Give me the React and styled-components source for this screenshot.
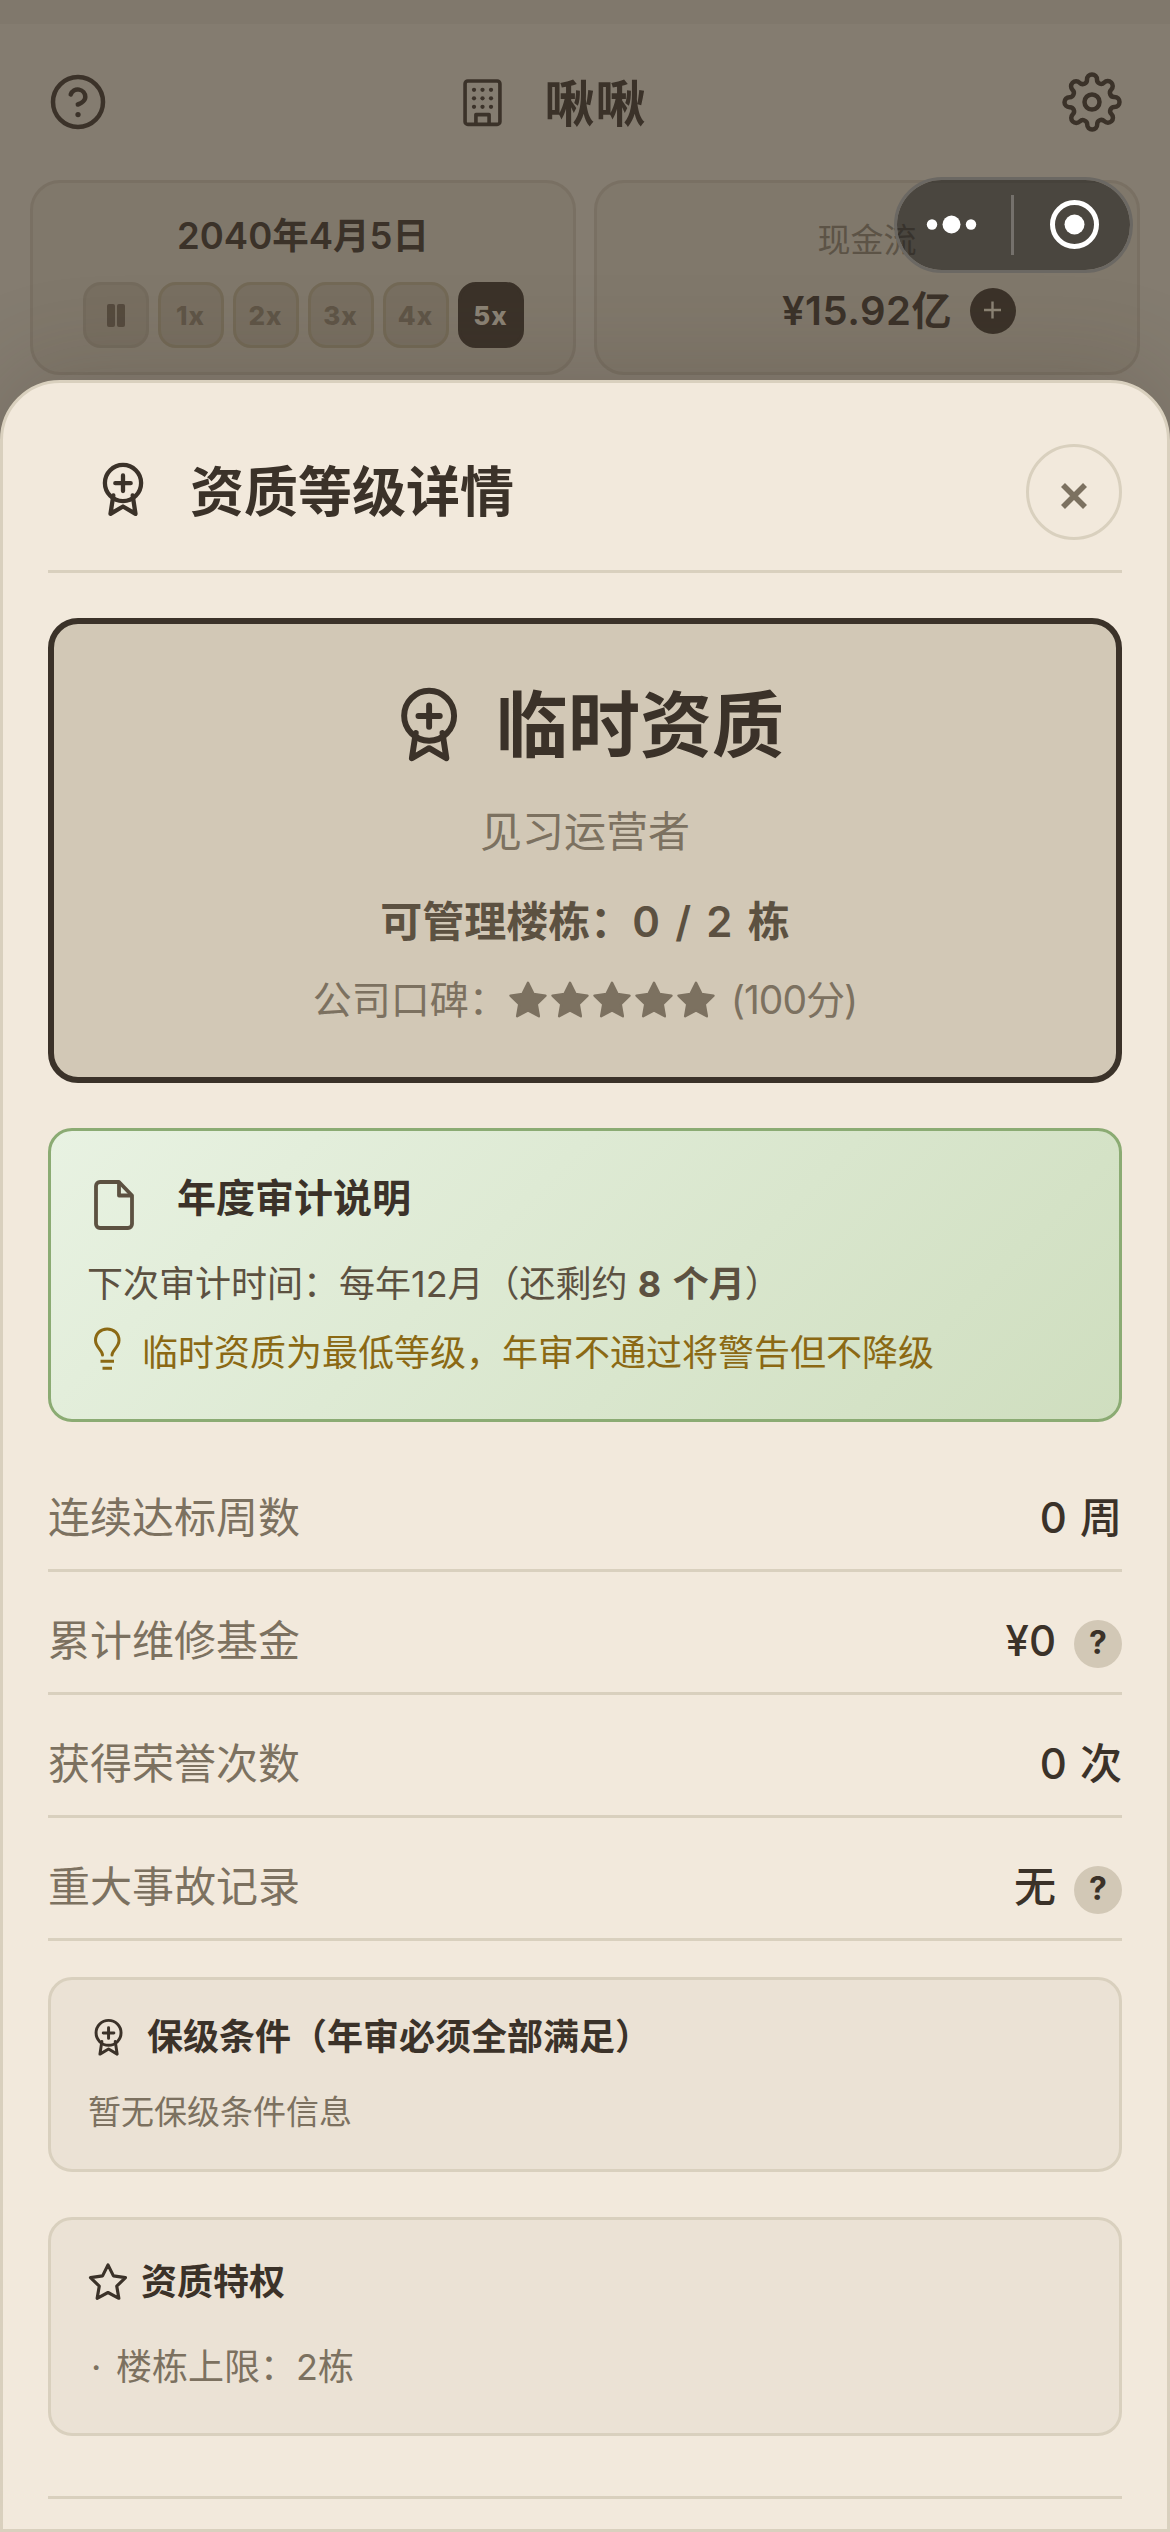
import styled, { createGlobalStyle } from "styled-components";
import { FiSettings } from "react-icons/fi";

const GlobalStyle = createGlobalStyle`
  * {
    box-sizing: border-box;
  }

  body {
    margin: 0;
    font-family: Inter, "Noto Sans CJK SC", sans-serif;
    color: #3b3229;
    background: #847c70;
  }
`;

const Page = styled.div`
  position: relative;
  display: flex;
  flex-direction: column;
  width: 1170px;
  height: 2532px;
  overflow: hidden;
  background: #847c70;
`;

const StatusBar = styled.div`
  height: 24px;
  background: #80786c;
`;

const TopBar = styled.header`
  display: flex;
  align-items: center;
  justify-content: space-between;
  height: 156px;
  padding: 0 48px;

  svg {
    display: block;
  }
`;

const CompanyName = styled.div`
  display: flex;
  align-items: center;
  gap: 37px;
  padding-right: 67px;
  font-size: 50px;
  font-weight: 600;
  letter-spacing: 1px;
`;

const CompanyText = styled.span`
  padding-top: 4px;
  line-height: 60px;
`;

const Summary = styled.div`
  display: grid;
  grid-template-columns: 1fr 1fr;
  gap: 18px;
  height: 200px;
  padding: 0 30px 5px;
`;

const SummaryCard = styled.div`
  display: flex;
  flex-direction: column;
  align-items: center;
  padding-top: ${(props) => props.$top}px;
  border: 3px solid #797063;
  border-radius: 30px;
  background: #80786b;
`;

const GameDate = styled.div`
  margin-bottom: 22px;
  font-size: 36.5px;
  font-weight: 600;
  line-height: 48px;
`;

const Speeds = styled.div`
  display: flex;
  gap: 9px;
`;

const SpeedButton = styled.div`
  display: flex;
  align-items: center;
  justify-content: center;
  gap: 2px;
  width: 66px;
  height: 66px;
  border: 3px solid #736956;
  border-radius: 18px;
  background: #786f61;
  color: #5f5547;
  font-size: 26px;
  font-weight: 800;
  letter-spacing: 1px;

  ${(props) => props.$paused && `border-color: #746b5d;`}

  ${(props) =>
    props.$active &&
    `
    border-color: #3b3229;
    background: #3b3229;
    color: #8b8375;
  `}
`;

const PauseBar = styled.i`
  width: 8px;
  height: 23px;
  border-radius: 2px;
  background: #554b3e;
`;

const CashLabel = styled.div`
  margin-bottom: 27px;
  color: #5c5346;
  font-size: 33px;
  line-height: 40px;
`;

const Cash = styled.div`
  display: flex;
  align-items: center;
  gap: 18px;
  padding-left: 64px;
  font-size: 40px;
  font-weight: 600;
  line-height: 48px;
  letter-spacing: 0.5px;
`;

const AddButton = styled.div`
  display: flex;
  align-items: center;
  justify-content: center;
  width: 46px;
  height: 46px;
  border-radius: 50%;
  background: #3b3229;
`;

const Capsule = styled.div`
  position: absolute;
  top: 177px;
  left: 894px;
  display: flex;
  align-items: center;
  width: 239px;
  height: 96px;
  border: 3px solid #6b6863;
  border-radius: 48px;
  background: rgba(20, 20, 20, 0.5);
  background-clip: padding-box;
`;

const Sheet = styled.section`
  flex: 1;
  padding: 61px 45px 0;
  border: 3px solid #d9d0be;
  border-radius: 60px 60px 0 0;
  background: #f2e9dc;
  box-shadow: 0 -12px 96px rgba(59, 50, 41, 0.2);
`;

const SheetHeader = styled.div`
  display: flex;
  align-items: flex-start;
  height: 129px;
  padding-left: 51px;
  border-bottom: 3px solid #d9d0be;
`;

const SheetTitle = styled.h1`
  flex: 1;
  margin: 0 0 0 43px;
  padding-top: 1px;
  font-size: 54px;
  font-weight: 700;
  line-height: 96px;
`;

const CloseButton = styled.div`
  display: flex;
  align-items: center;
  justify-content: center;
  width: 96px;
  height: 96px;
  padding-top: 8px;
  border: 3px solid #d9d0be;
  border-radius: 50%;
`;

const AwardSvg = styled.svg`
  flex: none;
  display: block;
  width: ${(props) => 48 * props.$scale}px;
  height: ${(props) => 59 * props.$scale}px;
  margin-top: ${(props) => props.$top || 0}px;
  margin-left: ${(props) => props.$left || 0}px;
`;

const LevelCard = styled.div`
  display: flex;
  flex-direction: column;
  align-items: center;
  height: 465px;
  margin-top: 45px;
  padding-top: 50px;
  border: 6px solid #3b3229;
  border-radius: 30px;
  background: #d2c8b6;
`;

const LevelName = styled.div`
  display: flex;
  align-items: center;
  gap: 34px;
  padding-left: 10px;
  font-size: 72px;
  font-weight: 700;
  line-height: 102px;
`;

const LevelLine = styled.div`
  display: flex;
  align-items: center;
  margin-top: ${(props) => props.$gap}px;
  color: ${(props) => (props.$strong ? "#5c5141" : "#7c7160")};
  font-size: ${(props) => props.$size}px;
  font-weight: ${(props) => (props.$strong ? 600 : 400)};
  line-height: 60px;
  white-space: pre;
  word-spacing: ${(props) => (props.$strong ? 4.6 : 0)}px;
`;

const Stars = styled.span`
  display: flex;
  margin: 0 14px 0 -1px;
`;

const Score = styled.span`
  letter-spacing: -1px;
`;

const AuditCard = styled.div`
  height: 294px;
  margin-top: 45px;
  padding: 37px 36px 0;
  border: 3px solid #8bab73;
  border-radius: 24px;
  background: linear-gradient(135deg, #e8f2e2, #cfdebf);
`;

const AuditTitle = styled.div`
  display: flex;
  height: 84px;
  font-size: 39px;
  font-weight: 700;
  line-height: 60px;

  svg {
    margin: 7px 33px 0 -3px;
  }
`;

const AuditText = styled.div`
  display: flex;
  height: 69px;
  color: ${(props) => (props.$tip ? "#8b6914" : "#5c5141")};
  font-size: 36px;
  line-height: 64px;
  white-space: pre;

  b {
    word-spacing: 3px;
  }

  svg {
    margin: 6px 15px 0 0;
  }
`;

const Stats = styled.div`
  padding-top: 27px;
`;

const StatRow = styled.div`
  display: flex;
  align-items: center;
  justify-content: space-between;
  height: 123px;
  padding-top: 18px;
  border-bottom: 3px solid #d9d0be;
  font-size: 42px;
  line-height: 60px;
`;

const StatLabel = styled.span`
  color: #7c7160;
`;

const StatValue = styled.span`
  display: flex;
  align-items: center;
  gap: 18px;
  font-weight: 500;
  word-spacing: 2px;
`;

const HelpBadge = styled.span`
  width: 48px;
  height: 48px;
  margin-top: 5px;
  border-radius: 50%;
  background: #d2c8b6;
  font-size: 32px;
  font-weight: 700;
  line-height: 45px;
  text-align: center;
`;

const InfoCard = styled.div`
  height: ${(props) => props.$height}px;
  margin-top: ${(props) => props.$gap}px;
  padding: 27px 36px 0;
  border: 3px solid #d9d0be;
  border-radius: 24px;
  background: #ebe2d5;
`;

const InfoTitle = styled.div`
  display: flex;
  align-items: center;
  gap: ${(props) => props.$gap}px;
  height: 60px;
  margin-top: ${(props) => props.$top || 0}px;
  font-size: 36px;
  font-weight: 700;
  line-height: 60px;
`;

const InfoText = styled.div`
  display: flex;
  margin-top: ${(props) => props.$top}px;
  padding-left: 1px;
  color: #7c7160;
  font-size: ${(props) => props.$size}px;
  line-height: 50px;
`;

const Bullet = styled.span`
  width: 28px;
  padding-left: 3px;
`;

const Footer = styled.div`
  margin-top: 60px;
  border-top: 3px solid #d9d0be;
`;

const STAR =
  "M12 2.2l3.1 6.3 6.9 1-5 4.9 1.2 6.9-6.2-3.3-6.2 3.3L7 14.4l-5-4.9 6.9-1z";

const stats = [
  { label: "连续达标周数", value: "0 周" },
  { label: "累计维修基金", value: "¥0", help: true },
  { label: "获得荣誉次数", value: "0 次" },
  { label: "重大事故记录", value: "无", help: true },
];

function HelpIcon() {
  return (
    <svg
      width="60"
      height="60"
      viewBox="0 0 24 24"
      fill="none"
      stroke="currentColor"
      strokeWidth="1.8"
      strokeLinecap="round"
      strokeLinejoin="round"
    >
      <circle cx="12" cy="12" r="10" />
      <path d="M9.09 9a3 3 0 0 1 5.83 1c0 2-3 3-3 3" />
      <path d="M12 17h.01" strokeWidth="2.1" />
    </svg>
  );
}

function BuildingIcon() {
  return (
    <svg
      width="51"
      height="51"
      viewBox="0 0 24 24"
      fill="none"
      stroke="currentColor"
      strokeWidth="1.7"
      strokeLinejoin="round"
    >
      <rect x="3.8" y="1.9" width="16.4" height="20.4" rx="1.3" />
      <path d="M8.9 22.3v-4.6h6.2v4.6" />
      <g fill="currentColor" stroke="none">
        {[6, 10, 14].map((y) =>
          [8, 12, 16].map((x) => (
            <circle key={`${x}-${y}`} cx={x} cy={y} r="1" />
          ))
        )}
      </g>
    </svg>
  );
}

function AwardIcon({ scale = 1, top, left }) {
  return (
    <AwardSvg
      $scale={scale}
      $top={top}
      $left={left}
      viewBox="0 0 48 59"
      fill="none"
      stroke="currentColor"
      strokeWidth="4.3"
      strokeLinecap="round"
      strokeLinejoin="round"
    >
      <circle cx="24" cy="23" r="18.1" />
      <path d="M24 15.5v15.5M16.3 23.2h15.4" />
      <path d="M14.3 35.5L11.5 53.8 24 46.5l12.5 7.3-2.8-18.3" />
    </AwardSvg>
  );
}

function FileIcon() {
  return (
    <svg
      width="60"
      height="60"
      viewBox="0 0 60 60"
      fill="none"
      stroke="#5c5141"
      strokeWidth="3.8"
      strokeLinejoin="round"
    >
      <path d="M35 7H16a4 4 0 0 0-4 4v38a4 4 0 0 0 4 4h28a4 4 0 0 0 4-4V20.5z" />
      <path d="M35 7v13.5h13" />
    </svg>
  );
}

function BulbIcon() {
  return (
    <svg
      width="40"
      height="44"
      viewBox="0 0 40 44"
      fill="none"
      stroke="currentColor"
      strokeWidth="3"
      strokeLinecap="round"
    >
      <path d="M15.5 28c0-4.5-7-8-7-14.5C8.5 6.5 13.5 2 20.2 2S32 6.5 32 13.5C32 20 25 23.5 25 28" />
      <path d="M13.5 34.2h13.5M15.5 41.3h9.5" strokeLinecap="butt" />
    </svg>
  );
}

function StatItem({ label, value, help }) {
  return (
    <StatRow>
      <StatLabel>{label}</StatLabel>
      <StatValue>
        {value}
        {help && <HelpBadge>?</HelpBadge>}
      </StatValue>
    </StatRow>
  );
}

function App() {
  return (
    <Page>
      <GlobalStyle />
      <StatusBar />
      <TopBar>
        <HelpIcon />
        <CompanyName>
          <BuildingIcon />
          <CompanyText>啾啾</CompanyText>
        </CompanyName>
        <FiSettings size={60} strokeWidth={1.8} />
      </TopBar>
      <Summary>
        <SummaryCard $top={29}>
          <GameDate>2040年4月5日</GameDate>
          <Speeds>
            <SpeedButton $paused>
              <PauseBar />
              <PauseBar />
            </SpeedButton>
            {[1, 2, 3, 4, 5].map((speed) => (
              <SpeedButton key={speed} $active={speed === 5}>
                {speed}x
              </SpeedButton>
            ))}
          </Speeds>
        </SummaryCard>
        <SummaryCard $top={37}>
          <CashLabel>现金流</CashLabel>
          <Cash>
            ¥15.92亿
            <AddButton>
              <svg width="20" height="20" viewBox="0 0 20 20" stroke="#8b8375">
                <path d="M1 9h17M9.5 0.5v17" strokeWidth="2.4" />
              </svg>
            </AddButton>
          </Cash>
        </SummaryCard>
      </Summary>
      <Sheet>
        <SheetHeader>
          <AwardIcon top={16} />
          <SheetTitle>资质等级详情</SheetTitle>
          <CloseButton>
            <svg width="28" height="28" viewBox="0 0 28 28" stroke="#7c7160">
              <path d="M3 3l22 22M25 3L3 25" strokeWidth="5.6" />
            </svg>
          </CloseButton>
        </SheetHeader>
        <LevelCard>
          <LevelName>
            <AwardIcon scale={1.38} />
            临时资质
          </LevelName>
          <LevelLine $size={42} $gap={26}>
            见习运营者
          </LevelLine>
          <LevelLine $size={42} $gap={30} $strong>
            可管理楼栋：0 / 2 栋
          </LevelLine>
          <LevelLine $size={39} $gap={18}>
            公司口碑：
            <Stars>
              {[1, 2, 3, 4, 5].map((star) => (
                <svg key={star} width="42" height="42" viewBox="0 0 24 24">
                  <path
                    d={STAR}
                    fill="currentColor"
                    stroke="currentColor"
                    strokeWidth="1.4"
                    strokeLinejoin="round"
                  />
                </svg>
              ))}
            </Stars>
            <Score>(100分)</Score>
          </LevelLine>
        </LevelCard>
        <AuditCard>
          <AuditTitle>
            <FileIcon />
            年度审计说明
          </AuditTitle>
          <AuditText>
            下次审计时间：每年12月（还剩约 <b>8 个月</b>）
          </AuditText>
          <AuditText $tip>
            <BulbIcon />
            临时资质为最低等级，年审不通过将警告但不降级
          </AuditText>
        </AuditCard>
        <Stats>
          {stats.map((item) => (
            <StatItem key={item.label} {...item} />
          ))}
        </Stats>
        <InfoCard $height={195} $gap={36}>
          <InfoTitle $gap={22}>
            <AwardIcon scale={0.69} left={5} />
            保级条件（年审必须全部满足）
          </InfoTitle>
          <InfoText $size={33} $top={20}>
            暂无保级条件信息
          </InfoText>
        </InfoCard>
        <InfoCard $height={219} $gap={45}>
          <InfoTitle $gap={12} $top={5}>
            <svg width="42" height="42" viewBox="0 0 24 24">
              <path
                d={STAR}
                fill="none"
                stroke="currentColor"
                strokeWidth="1.8"
                strokeLinejoin="round"
              />
            </svg>
            资质特权
          </InfoTitle>
          <InfoText $size={36} $top={30}>
            <Bullet>·</Bullet>
            楼栋上限：2栋
          </InfoText>
        </InfoCard>
        <Footer />
      </Sheet>
      <Capsule>
        <svg width="233" height="90" viewBox="897 180 233 90" fill="#fff">
          <circle cx="932" cy="224.5" r="5.2" />
          <circle cx="951.5" cy="224.5" r="9" />
          <circle cx="971" cy="224.5" r="5.2" />
          <path d="M1011 195h3v60h-3z" fill="#75716c" />
          <circle
            cx="1074.5"
            cy="224.5"
            r="22"
            fill="none"
            stroke="#fff"
            strokeWidth="5"
          />
          <circle cx="1074.5" cy="224.5" r="10" />
        </svg>
      </Capsule>
    </Page>
  );
}

export default App;
